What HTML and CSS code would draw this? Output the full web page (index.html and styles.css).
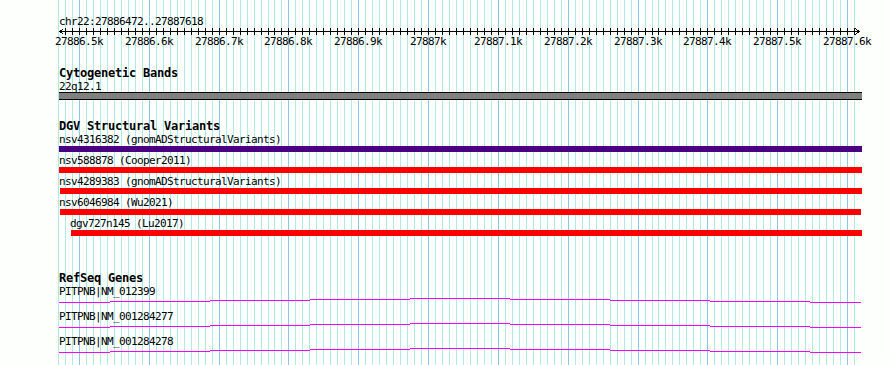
FILE: index.html
```html
<!DOCTYPE html>
<html lang="en">
  <head>
    <meta charset="utf-8" />
    <title>chr22:27886472..27887618</title>
    <link rel="stylesheet" href="styles.css">
  </head>
  <body>
    <div class="page">
      <div class="grid" id="grid"></div>
      <div class="tracks">
        <div class="ruler">
          <div class="ruler-title">chr22:27886472..27887618</div>
          <svg class="scale" width="803" height="9">
            <path class="axis" d="M0 4.5H801M4.5 1.5L1 4.5L4.5 7.5M796.5 1.5L800 4.5L796.5 7.5" />
            <path class="axis" id="ticks" d="" />
          </svg>
          <div class="tick-labels" id="tickLabels"></div>
        </div>

        <div class="track cyto">
          <div class="track-title">Cytogenetic Bands</div>
          <div class="label">22q12.1</div>
          <div class="band"></div>
        </div>

        <div class="track dgv">
          <div class="track-title">DGV Structural Variants</div>
          <div class="variant">
            <div class="label">nsv4316382 (gnomADStructuralVariants)</div>
            <div class="bar bar-loss" style="margin-left: 0px; width: 803px"></div>
          </div>
          <div class="variant">
            <div class="label">nsv588878 (Cooper2011)</div>
            <div class="bar" style="margin-left: 0px; width: 803px"></div>
          </div>
          <div class="variant">
            <div class="label">nsv4289383 (gnomADStructuralVariants)</div>
            <div class="bar" style="margin-left: 1px; width: 802px"></div>
          </div>
          <div class="variant">
            <div class="label">nsv6046984 (Wu2021)</div>
            <div class="bar" style="margin-left: 1px; width: 801px"></div>
          </div>
          <div class="variant">
            <div class="label" style="margin-left: 11px">dgv727n145 (Lu2017)</div>
            <div class="bar" style="margin-left: 12px; width: 791px"></div>
          </div>
        </div>

        <div class="track refseq">
          <div class="track-title">RefSeq Genes</div>
          <div class="gene">
            <div class="label">PITPNB|NM_012399</div>
            <svg class="intron" width="803" height="14">
              <path d="M0 5.5H51M51 4.5H151M151 3.5H251M251 2.5H351M351 1.5H451M451 2.5H551M551 3.5H651M651 4.5H751M751 5.5H802" />
            </svg>
          </div>
          <div class="gene">
            <div class="label">PITPNB|NM_001284277</div>
            <svg class="intron" width="803" height="14">
              <path d="M0 5.5H51M51 4.5H151M151 3.5H251M251 2.5H351M351 1.5H451M451 2.5H551M551 3.5H651M651 4.5H751M751 5.5H802" />
            </svg>
          </div>
          <div class="gene">
            <div class="label">PITPNB|NM_001284278</div>
            <svg class="intron" width="803" height="14">
              <path d="M0 5.5H51M51 4.5H151M151 3.5H251M251 2.5H351M351 1.5H451M451 2.5H551M551 3.5H651M651 4.5H751M751 5.5H802" />
            </svg>
          </div>
        </div>
      </div>
    </div>
    <script src="script.js"></script>
  </body>
</html>
```

FILE: styles.css
```css
body {
  margin: 0;
  background: #fcfffc;
}

.page {
  position: relative;
  width: 890px;
  height: 365px;
  overflow: hidden;
  font-family: "DejaVu Sans Mono", monospace;
  color: #000;
}

.grid {
  position: absolute;
  top: 0;
  left: 0;
  right: 0;
  bottom: 0;
}

.grid-line {
  position: absolute;
  top: 0;
  bottom: 0;
  width: 1px;
  background: #aeeaea;
}

.grid-line.major {
  background: #88c8ee;
}

.tracks {
  position: relative;
  margin-left: 59px;
  width: 803px;
  padding-top: 16px;
}

.ruler-title,
.label,
.tick-labels {
  height: 11px;
  font-size: 11px;
  line-height: 11px;
  letter-spacing: -0.62px;
  white-space: nowrap;
}

.scale {
  display: block;
}

.axis {
  fill: none;
  stroke: #000;
  stroke-width: 1;
  shape-rendering: crispEdges;
}

.tick-labels {
  position: relative;
}

.tick-label {
  position: absolute;
  top: 0;
  transform: translateX(-50%);
}

.track-title {
  height: 12px;
  font-size: 12px;
  font-weight: bold;
  line-height: 12px;
  letter-spacing: -0.22px;
  white-space: nowrap;
}

.cyto {
  margin-top: 20px;
}

.cyto .label {
  margin-top: 2px;
}

.band {
  height: 6px;
  background: #808080;
  border-top: 1px solid #000;
  border-bottom: 1px solid #000;
}

.dgv {
  margin-top: 20px;
}

.dgv .track-title {
  margin-bottom: 1px;
}

.variant {
  padding: 1px 0 2px;
}

.bar {
  height: 6px;
  margin-top: 1px;
  background: #ff0000;
}

.bar-loss {
  background: #4b0082;
}

.refseq {
  margin-top: 34px;
}

.refseq .track-title {
  margin-bottom: 2px;
}

.gene {
  height: 25px;
}

.intron {
  display: block;
}

.intron path {
  fill: none;
  stroke: #ff00ff;
  stroke-width: 1;
  shape-rendering: crispEdges;
}
```

FILE: script.js
```js
// chr22:27886472..27887618 drawn on 803px starting at x=59
var START = 27886472;
var END = 27887618;
var ORIGIN = 59;

function toX(bp) {
  return Math.round(79 + (bp - 27886500) * 0.69818);
}

var grid = document.getElementById("grid");
var labels = document.getElementById("tickLabels");
var ticks = "";

for (var bp = 27886470; bp <= END; bp += 10) {
  var x = toX(bp);
  var major = bp % 100 == 0;

  var line = document.createElement("div");
  line.className = major ? "grid-line major" : "grid-line";
  line.style.left = x + "px";
  grid.appendChild(line);

  if (bp >= START) {
    ticks += "M" + (x - ORIGIN + 0.5) + " 1V8";
  }

  if (major) {
    var label = document.createElement("span");
    label.className = "tick-label";
    label.style.left = x - ORIGIN + "px";
    label.textContent = bp / 1000 + "k";
    labels.appendChild(label);
  }
}

document.getElementById("ticks").setAttribute("d", ticks);
```
